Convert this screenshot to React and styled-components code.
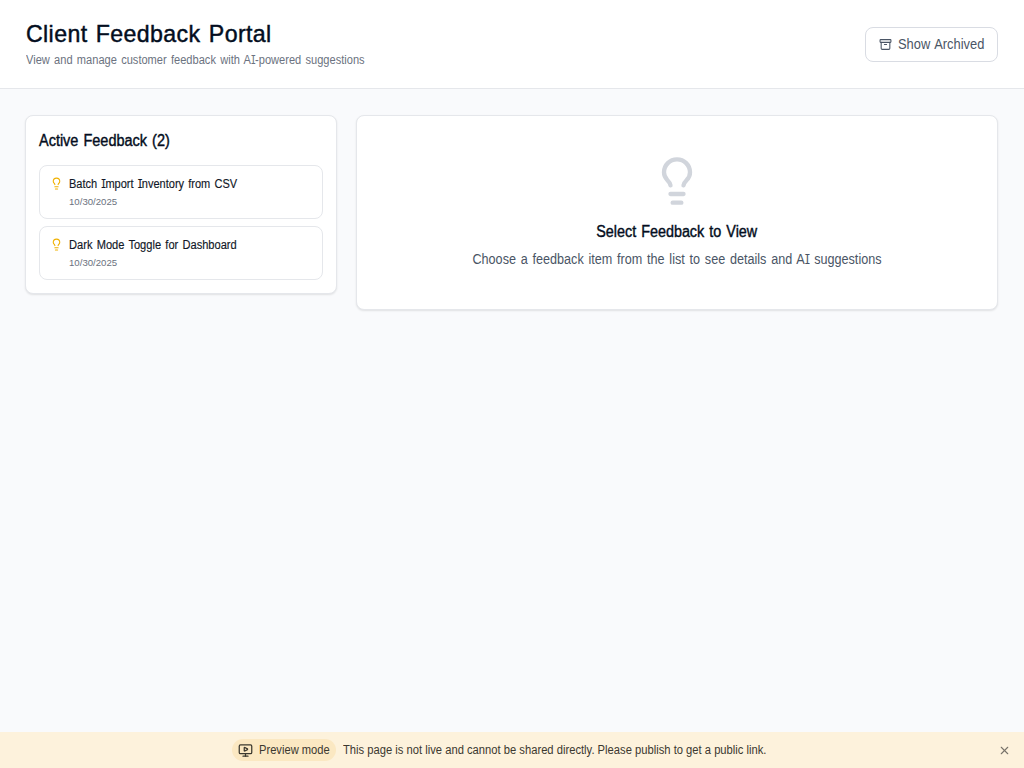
import React from 'react';
import styled, { createGlobalStyle } from 'styled-components';
import { Archive, Lightbulb, MonitorPlay, X } from 'lucide-react';

const GlobalStyle = createGlobalStyle`
  *, *::before, *::after { box-sizing: border-box; }
  html { font-size: 13px; }
  body { margin: 0; background: #f9fafb; }
  h1, h2, h3, p { margin: 0; }
  svg { display: block; flex-shrink: 0; }
`;

const Page = styled.div`
  height: 100vh;
  display: flex;
  flex-direction: column;
  background: #f9fafc;
  color: #030d20;
  font-family: 'Liberation Sans', Arial, sans-serif;
`;

const Header = styled.header`
  height: 89px;
  padding: 0 26px;
  display: flex;
  align-items: center;
  justify-content: space-between;
  background: #fff;
  border-bottom: 1px solid #e5e7eb;
`;

/* Slightly condensed text, set from its left edge unless told otherwise. */
const Condensed = styled.span`
  display: inline-block;
  white-space: nowrap;
  transform: scaleX(${(p) => p.$scale});
  transform-origin: ${(p) => p.$origin || 'left'} center;
`;

const Title = styled.h1`
  font-size: 24.5px;
  line-height: 31px;
  font-weight: 400;
  letter-spacing: 0.4px;
  word-spacing: 1.6px;
  -webkit-text-stroke: 0.45px currentColor;
`;

const Subtitle = styled.p`
  margin-top: 1px;
  font-size: 12px;
  line-height: 20px;
  word-spacing: 1.3px;
  color: #6b7280;
`;

const ArchiveButton = styled.button`
  width: 133px;
  height: 35px;
  padding: 0 12.5px;
  display: flex;
  align-items: center;
  gap: 6.5px;
  border: 1px solid #d9dce3;
  border-radius: 8px;
  background: #fff;
  color: #4a5565;
  font: 14px/20px 'Liberation Sans', Arial, sans-serif;
  word-spacing: 1.2px;
`;

const Main = styled.main`
  flex: 1;
  padding: 26px 26px 26px 25px;
  display: grid;
  grid-template-columns: 312px 1fr;
  gap: 19px;
  align-items: start;
`;

const Card = styled.section`
  background: #fff;
  border: 1px solid #e5e7eb;
  border-radius: 8px;
  box-shadow: 0 1px 2px rgba(0, 0, 0, 0.1);
`;

const ListCard = styled(Card)`
  padding: 12px 13px 13px;
`;

const Heading = styled.h2`
  font-size: 16px;
  line-height: 25px;
  font-weight: 400;
  word-spacing: 1.2px;
  -webkit-text-stroke: 0.4px currentColor;
`;

const List = styled.div`
  margin-top: 12px;
  display: flex;
  flex-direction: column;
  gap: 6.5px;
`;

const Item = styled.article`
  height: 54px;
  padding: 9px 9.5px;
  display: flex;
  gap: 6.5px;
  border: 1px solid #e5e7eb;
  border-radius: 8px;
  color: #f0b100;

  svg { margin-top: 2px; }
`;

const ItemTitle = styled.h3`
  font-size: 12px;
  line-height: 18px;
  font-weight: 400;
  word-spacing: 1.2px;
  color: #111827;
  -webkit-text-stroke: 0.15px currentColor;
`;

const ItemDate = styled.p`
  margin-top: 1px;
  font-size: 9.65px;
  line-height: 16px;
  color: #6b7280;
`;

const EmptyCard = styled(Card)`
  height: 195px;
  padding-top: 39px;
  display: flex;
  flex-direction: column;
  align-items: center;
`;

const EmptyTitle = styled(Heading)`
  margin-top: 12px;
`;

const EmptyText = styled.p`
  margin-top: 5px;
  font-size: 14px;
  line-height: 21px;
  word-spacing: 1.4px;
  color: #4a5565;
`;

const SerifI = styled.span`
  font-family: Inter, sans-serif;
  font-size: 0.95em;
  line-height: 1;
  letter-spacing: -0.6px;
  font-feature-settings: 'cv08' 1;
`;

const PreviewBar = styled.footer`
  height: 36px;
  padding: 0 13px 0 0;
  display: grid;
  grid-template-columns: 232px 540px 1fr;
  align-items: center;
  background: #fdf2dc;
  color: #3b382f;
  font-size: 12px;
`;

const Message = styled.div`
  grid-column: 2;
  display: flex;
  align-items: center;
  gap: 7px;
`;

const Badge = styled.span`
  width: 104px;
  flex-shrink: 0;
  height: 22px;
  padding: 0 6px;
  display: flex;
  align-items: center;
  gap: 6px;
  border-radius: 11px;
  background: #fbe8c2;
`;

const Close = styled.span`
  justify-self: end;
  color: #77736a;
`;

const FEEDBACK = [
  { title: <>Batch <SerifI>I</SerifI>mport <SerifI>I</SerifI>nventory from CSV</>, date: '10/30/2025', scale: 0.918 },
  { title: 'Dark Mode Toggle for Dashboard', date: '10/30/2025', scale: 0.925 },
];

export default function App() {
  return (
    <Page>
      <GlobalStyle />
      <Header>
        <div>
          <Title><Condensed $scale={0.945}>Client Feedback Portal</Condensed></Title>
          <Subtitle>
            <Condensed $scale={0.923}>View and manage customer feedback with A<SerifI>I</SerifI>-powered suggestions</Condensed>
          </Subtitle>
        </div>
        <ArchiveButton><Archive size={13} /><Condensed $scale={0.92}>Show Archived</Condensed></ArchiveButton>
      </Header>
      <Main>
        <ListCard>
          <Heading><Condensed $scale={0.904}>Active Feedback (2)</Condensed></Heading>
          <List>
            {FEEDBACK.map((item, i) => (
              <Item key={i}>
                <Lightbulb size={13} />
                <div>
                  <ItemTitle><Condensed $scale={item.scale}>{item.title}</Condensed></ItemTitle>
                  <ItemDate>{item.date}</ItemDate>
                </div>
              </Item>
            ))}
          </List>
        </ListCard>
        <EmptyCard>
          <Lightbulb size={52} color="#d1d5dc" />
          <EmptyTitle><Condensed $scale={0.897} $origin="center">Select Feedback to View</Condensed></EmptyTitle>
          <EmptyText>
            <Condensed $scale={0.901} $origin="center">
              Choose a feedback item from the list to see details and A<SerifI>I</SerifI> suggestions
            </Condensed>
          </EmptyText>
        </EmptyCard>
      </Main>
      <PreviewBar>
        <Message>
          <Badge><MonitorPlay size={15} /><Condensed $scale={0.93}>Preview mode</Condensed></Badge>
          <Condensed $scale={0.934}>
            This page is not live and cannot be shared directly. Please publish to get a public link.
          </Condensed>
        </Message>
        <Close><X size={13} strokeWidth={2} /></Close>
      </PreviewBar>
    </Page>
  );
}
